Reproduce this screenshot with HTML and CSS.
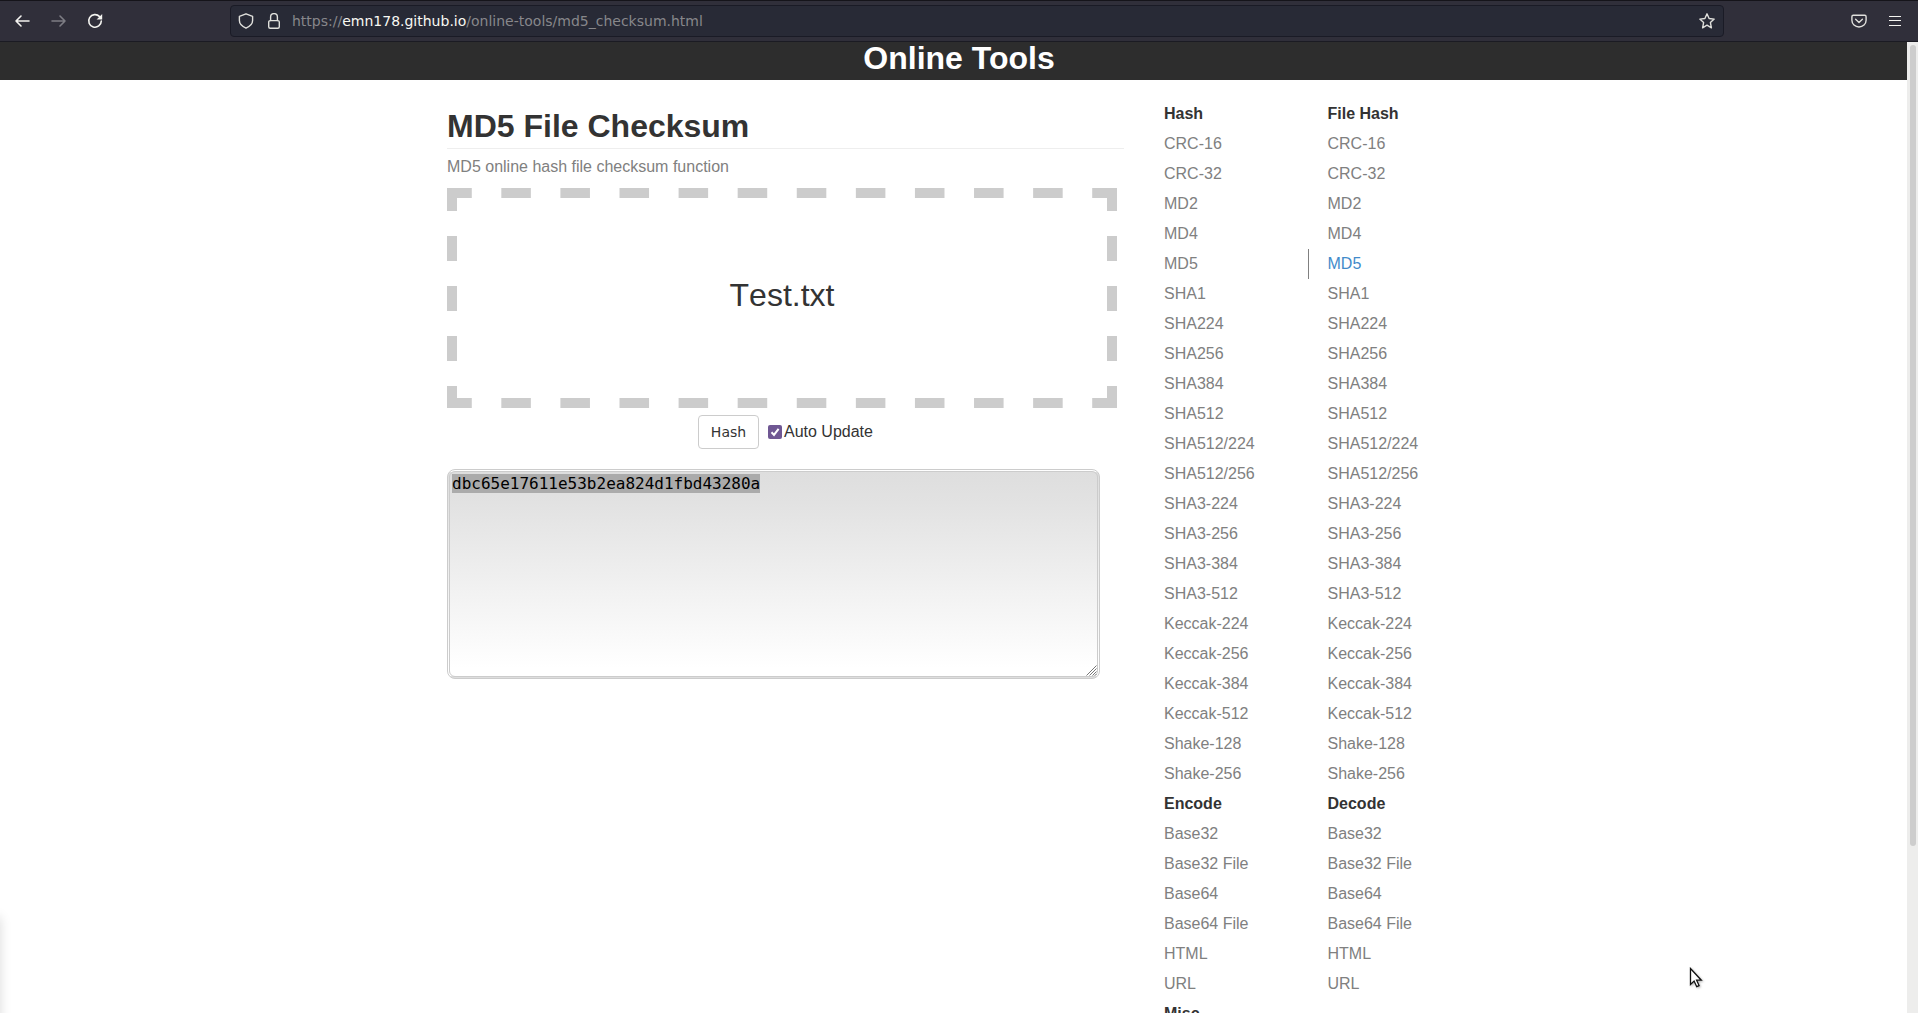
FILE: index.html
```html
<!DOCTYPE html>
<html lang="en">
<head>
<meta charset="utf-8">
<title>MD5 File Checksum Online</title>
<link rel="stylesheet" href="styles.css">
</head>
<body>
<div class="toolbar">
  <svg class="ico back" width="16" height="16" viewBox="0 0 16 16"><path d="M15 8H2M7 3L2 8l5 5"/></svg>
  <svg class="ico forward" width="16" height="16" viewBox="0 0 16 16"><path d="M1 8h13M9 3l5 5-5 5"/></svg>
  <svg class="ico reload" width="16" height="16" viewBox="0 0 16 16"><path d="M12.6 3.6A6.3 6.3 0 1 0 14.3 8"/><path class="solid" d="M15.2 1v5.6H9.6z"/></svg>
  <div class="urlbar">
    <svg class="ico thin" width="16" height="16" viewBox="0 0 16 16"><path d="M8 .8l6.6 2.6v4.2c0 3.4-3.4 6.2-6.6 7.6-3.2-1.4-6.6-4.2-6.6-7.6V3.4z"/></svg>
    <svg class="ico thin" width="16" height="16" viewBox="0 0 16 16"><rect x="2.7" y="7.6" width="10.6" height="7.7" rx="1.5"/><path d="M4.6 7.6V4a3.4 3.4 0 0 1 6.8 0v3.6"/></svg>
    <span class="url">https://<b>emn178.github.io</b>/online-tools/md5_checksum.html</span>
    <svg class="ico thin star" width="18" height="18" viewBox="0 0 18 18"><path d="M9 1.8l2.1 4.7 5.1.6-3.8 3.5 1 5.2L9 13.2l-4.4 2.6 1-5.2L1.8 7.1l5.1-.6z"/></svg>
  </div>
  <svg class="ico thin pocket" width="16" height="16" viewBox="0 0 16 16"><path d="M2.3 2.3h11.4q1.4 0 1.4 1.4v3.6a7.1 6.7 0 0 1-14.2 0V3.7q0-1.4 1.4-1.4z"/><path d="M4.6 6.2L8 9.4l3.4-3.2"/></svg>
  <svg class="ico menu" width="12" height="12" viewBox="0 0 12 12"><path d="M0 1.5h12M0 5.5h12M0 10.5h12"/></svg>
</div>
<div class="viewport">
  <div class="page">
    <header class="site">Online Tools</header>
    <div class="columns">
      <main>
        <h1>MD5 File Checksum</h1>
        <p class="desc">MD5 online hash file checksum function</p>
        <div class="drop">
          <svg class="dashes" width="670" height="220" viewBox="0 0 670 220">
            <path class="h" d="M10 5h650M10 215h650"/>
            <path class="v" d="M5 10v200M665 10v200"/>
            <path class="corner" d="M0 0h10v10H0zM660 0h10v10h-10zM0 210h10v10H0zM660 210h10v10h-10z"/>
          </svg>
          <span>Test.txt</span>
        </div>
        <div class="actions">
          <button class="btn">Hash</button>
          <label class="auto"><svg width="14" height="14" viewBox="0 0 14 14"><rect width="14" height="14" rx="2"/><path d="M3.5 7.3l2.5 2.6 4.6-6"/></svg>Auto Update</label>
        </div>
        <div class="output"><span class="sel">dbc65e17611e53b2ea824d1fbd43280a</span>
          <svg class="grip" width="11" height="11" viewBox="0 0 11 11"><path d="M.5 10.5l10-10M3.5 10.5l7-7M6.5 10.5l4-4M9 10.5l1.5-1.5"/></svg>
        </div>
      </main>
      <nav>
        <ul>
          <li class="head">Hash</li><li>CRC-16</li><li>CRC-32</li><li>MD2</li><li>MD4</li><li>MD5</li><li>SHA1</li><li>SHA224</li><li>SHA256</li><li>SHA384</li><li>SHA512</li><li>SHA512/224</li><li>SHA512/256</li><li>SHA3-224</li><li>SHA3-256</li><li>SHA3-384</li><li>SHA3-512</li><li>Keccak-224</li><li>Keccak-256</li><li>Keccak-384</li><li>Keccak-512</li><li>Shake-128</li><li>Shake-256</li>
          <li class="head">Encode</li><li>Base32</li><li>Base32 File</li><li>Base64</li><li>Base64 File</li><li>HTML</li><li>URL</li>
          <li class="head">Misc</li>
        </ul>
        <ul>
          <li class="head">File Hash</li><li>CRC-16</li><li>CRC-32</li><li>MD2</li><li>MD4</li><li class="active">MD5</li><li>SHA1</li><li>SHA224</li><li>SHA256</li><li>SHA384</li><li>SHA512</li><li>SHA512/224</li><li>SHA512/256</li><li>SHA3-224</li><li>SHA3-256</li><li>SHA3-384</li><li>SHA3-512</li><li>Keccak-224</li><li>Keccak-256</li><li>Keccak-384</li><li>Keccak-512</li><li>Shake-128</li><li>Shake-256</li>
          <li class="head">Decode</li><li>Base32</li><li>Base32 File</li><li>Base64</li><li>Base64 File</li><li>HTML</li><li>URL</li>
        </ul>
      </nav>
    </div>
    <div class="edge"></div>
  </div>
  <div class="scrollbar"><div class="thumb"></div></div>
</div>
<svg class="cursor" width="15" height="22" viewBox="0 0 15 22"><path d="M1.5 1.5v16l3.6-3.4 2.6 5.6 2.4-1.1-2.5-5.4h4.7z"/></svg>
</body>
</html>
```
FILE: styles.css
```css
* { box-sizing: border-box; }
html, body { height: 100%; }
body {
  margin: 0;
  overflow: hidden;
  display: flex;
  flex-direction: column;
  background: #fff;
  color: #333;
  font: 16px/30px "Liberation Sans", Arial, sans-serif;
}

/* browser toolbar */
.toolbar {
  flex: none;
  height: 42px;
  display: flex;
  align-items: center;
  padding: 0 17px 0 14px;
  background: #302f3a;
  border-top: 1px solid #15141a;
  border-bottom: 1px solid #1b1b23;
}
.ico { flex: none; fill: none; stroke: #f4f4f0; stroke-width: 1.6; stroke-linejoin: round; stroke-linecap: round; }
.thin { stroke-width: 1.4; stroke: #e0e0dc; }
.forward { margin-left: 21px; stroke: #7d7d84; }
.reload { margin-left: 20px; }
.reload .solid { fill: #f4f4f0; stroke: none; }
.urlbar {
  width: 1494px;
  height: 32px;
  margin-left: 127px;
  padding: 0 7px 0 7px;
  display: flex;
  align-items: center;
  gap: 12px;
  background: #282a36;
  border: 1px solid #1a1b26;
  border-radius: 4px;
}
.url { font: 14px/20px "DejaVu Sans", sans-serif; color: #87878b; margin-left: -2px; white-space: nowrap; }
.url b { font-weight: 400; color: #f8f8f2; }
.star { margin-left: auto; }
.pocket { margin-left: 127px; }
.menu { margin-left: auto; stroke-width: 1; stroke-linecap: butt; }

/* page */
.viewport { flex: 1; min-height: 0; display: flex; }
.page { flex: 1; position: relative; overflow: hidden; }
.site {
  height: 38px;
  padding: 0 0 6px 11px;
  background: #2d2d2d;
  color: #fff;
  text-align: center;
  font-size: 32px;
  line-height: 32px;
  font-weight: 700;
}
.columns { display: flex; padding: 18px 0 0 447px; }
main { width: 677px; }
h1 { margin: 5px 0 3px; padding-bottom: 5px; height: 46px; border-bottom: 1px solid #eee; font-size: 32px; line-height: 46px; }
.desc { margin: 0 0 7px; color: #808080; line-height: 29px; }
.drop { position: relative; width: 670px; height: 220px; display: flex; align-items: center; justify-content: center; font-size: 32px; font-kerning: none; padding-bottom: 6px; }
.dashes { position: absolute; left: 0; top: 0; fill: none; stroke: #ccc; stroke-width: 10; }
.dashes .h { stroke-dasharray: 29.545; stroke-dashoffset: 14.773; }
.dashes .v { stroke-dasharray: 25; stroke-dashoffset: 12; }
.dashes .corner { fill: #ccc; stroke: none; }
.actions { display: flex; align-items: center; padding-left: 251px; margin-top: 7px; height: 34px; }
.btn {
  width: 61px;
  height: 34px;
  padding: 0;
  background: #fff;
  border: 1px solid #ccc;
  border-radius: 4px;
  color: #333;
  font: 14px "DejaVu Sans", sans-serif;
}
.auto { display: flex; align-items: center; gap: 2px; margin-left: 9px; }
.auto rect { fill: #6f5793; }
.auto path { fill: none; stroke: #fff; stroke-width: 2; }
.output {
  position: relative;
  width: 653px;
  height: 210px;
  margin-top: 20px;
  padding: 2px;
  border: 3px double #ccc;
  border-radius: 8px;
  background: linear-gradient(#dedede, #e2e2e2 15%, #fff 96%);
  color: #000;
  font: 16px/19px "DejaVu Sans Mono", monospace;
}
.sel { display: inline-block; height: 19px; background: #ababab; }
.grip { position: absolute; right: 0; bottom: 0; stroke: #777; stroke-width: 1; }

nav { display: flex; margin: 1px 0 0 25px; }
ul { list-style: none; margin: 0; padding: 0; width: 163.5px; }
li { height: 30px; padding-left: 15px; color: #808080; white-space: nowrap; }
.head { color: #333; font-weight: 700; }
.active { color: #428bca; padding-left: 19px; margin-left: -5px; border-left: 1px solid #808080; }

.edge { position: absolute; left: -12px; top: 875px; width: 12px; height: 120px; box-shadow: 0 0 12px rgba(0,0,0,.15); }
.scrollbar { width: 11px; padding: 3px 2px 0 3px; background: #ededec; }
.thumb { height: 801px; border-radius: 3px; background: #cdcdcd; }

.cursor { position: absolute; left: 1689px; top: 967px; fill: #fff; stroke: #111; stroke-width: 1.3; filter: drop-shadow(1px 1px 1px rgba(0,0,0,.3)); }
```
